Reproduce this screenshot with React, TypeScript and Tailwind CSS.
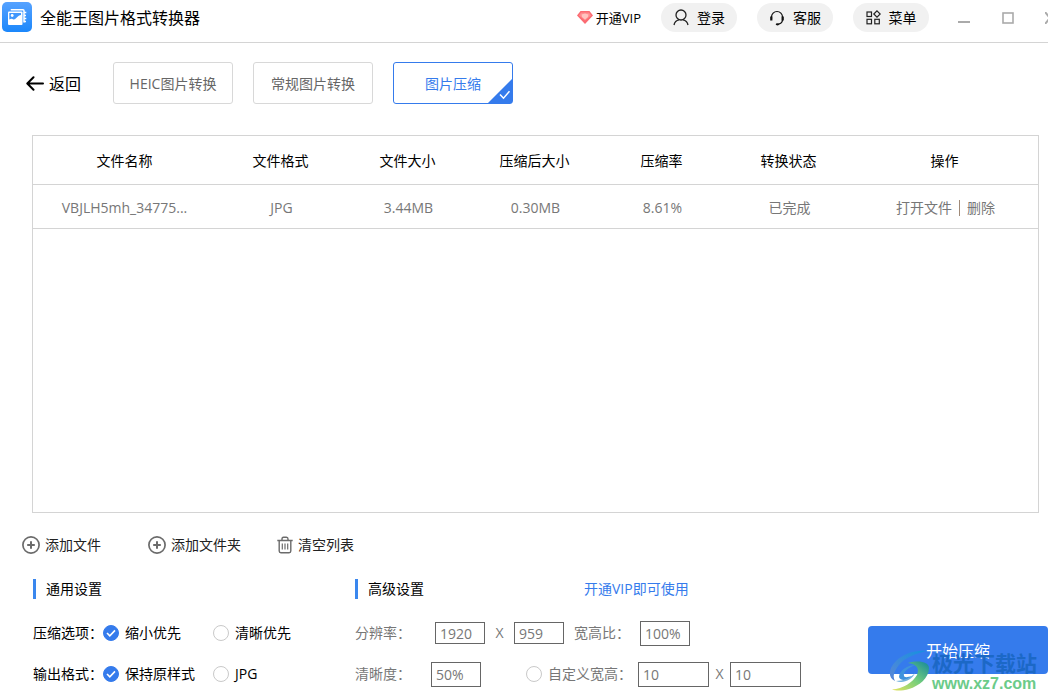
import type { ReactNode } from "react";

const columns = [
  { title: "文件名称", width: "w-[185px]" },
  { title: "文件格式", width: "w-[127px]" },
  { title: "文件大小", width: "w-[127px]" },
  { title: "压缩后大小", width: "w-[127px]" },
  { title: "压缩率", width: "w-[127px]" },
  { title: "转换状态", width: "w-[127px]" },
  { title: "操作", width: "w-[185px]" },
];

const files = [
  { name: "VBJLH5mh_34775...", format: "JPG", size: "3.44MB", compressed: "0.30MB", ratio: "8.61%", status: "已完成" },
];

function AppLogo() {
  return (
    <svg width="30" height="30" viewBox="0 0 30 30" aria-hidden="true">
      <defs>
        <linearGradient id="logo" x1="0" y1="0" x2="0" y2="1">
          <stop offset="0" stopColor="#56a2ff" />
          <stop offset="1" stopColor="#1b87fb" />
        </linearGradient>
      </defs>
      <rect width="30" height="30" rx="5" fill="url(#logo)" />
      <path d="M9.500 8.500V7.700H21q1 0 1 1V20.500" fill="none" stroke="#fff" strokeWidth="1.500" />
      <path d="M22 10.500h2.300M22 13.500h2M22 16.500h2.300M22 19.500h2" stroke="#fff" strokeWidth="1.300" />
      <rect x="6" y="9.500" width="14.500" height="13.500" rx="1" fill="#fff" />
      <path d="M7.300 17.500V11H19V13C15.500 13 14 18 11.500 17.500C10 16.500 9 16.500 7.300 17.500Z" fill="#3f97fd" />
      <circle cx="10.200" cy="13.500" r="1.400" fill="#fff" />
    </svg>
  );
}

function Diamond() {
  return (
    <svg width="16" height="13" viewBox="0 0 16 13" aria-hidden="true">
      <path d="M3.500 0h9L16 4.500 8 13 0 4.500Z" fill="#fb6b72" />
      <path d="M4 1.500h8l2 3-6 5-6-5Z" fill="#ff8d8f" />
      <path d="M4.500 3.500 8 2.500l3.500 1L11 6 8 8.500 5 6Z" fill="#ffc3c0" />
    </svg>
  );
}

function UserIcon() {
  return (
    <svg width="16" height="17" viewBox="0 0 16 17" fill="none" stroke="#222" strokeWidth="1.300" aria-hidden="true">
      <circle cx="8" cy="6" r="5" />
      <path d="M1 16c.6-3 2.600-4.800 5-5.200M15 16c-.6-3-2.600-4.800-5-5.200" />
    </svg>
  );
}

function HeadsetIcon() {
  return (
    <svg width="16" height="16" viewBox="0 0 16 16" fill="none" stroke="#111" aria-hidden="true">
      <path d="M2.500 9V7a5.500 5.500 0 0 1 11 0v2.500c0 2-1.500 4.200-4 4.700" strokeWidth="1.200" />
      <path d="M2.300 6.500v4M13.700 6.500v4" strokeWidth="2.200" />
      <ellipse cx="8.500" cy="14.300" rx="1.800" ry="1.100" fill="#111" stroke="none" />
    </svg>
  );
}

function MenuIcon() {
  return (
    <svg width="15" height="15" viewBox="0 0 15 15" fill="none" stroke="#222" strokeWidth="1.200" aria-hidden="true">
      <rect x="1" y="2" width="4.500" height="4.500" />
      <path d="M11 .8 14.200 4 11 7.200 7.800 4Z" />
      <rect x="1" y="9.300" width="4.500" height="4.500" />
      <rect x="8.800" y="9.300" width="4.500" height="4.500" />
    </svg>
  );
}

function BackArrow() {
  return (
    <svg width="18" height="15" viewBox="0 0 18 15" fill="none" stroke="#000" strokeWidth="2" strokeLinecap="round" strokeLinejoin="round" aria-hidden="true">
      <path d="M17 7.500H1.500M7.500 1.200 1.300 7.500l6.200 6.300" />
    </svg>
  );
}

function PlusIcon() {
  return (
    <svg width="18" height="18" viewBox="0 0 18 18" fill="none" stroke="#6b6b6b" aria-hidden="true">
      <circle cx="9" cy="9" r="8.100" strokeWidth="1.700" />
      <path d="M9 5.200v7.600M5.200 9h7.600" strokeWidth="2" />
    </svg>
  );
}

function TrashIcon() {
  return (
    <svg width="16" height="18" viewBox="0 0 16 18" fill="none" stroke="#6b6b6b" strokeWidth="1.400" aria-hidden="true">
      <path d="M.3 4.500h15.400M5 4.200V3q0-1.800 1.500-1.800h3Q11 1.200 11 3v1.200M2.200 4.500V15q0 1.700 1.700 1.700h8.200q1.700 0 1.700-1.700V4.500" />
      <path d="M5.300 7.500v6M8 7.500v6M10.700 7.500v6" strokeWidth="1.200" />
    </svg>
  );
}

function PillButton({ icon, children }: { icon: ReactNode; children: ReactNode }) {
  return (
    <button type="button" className="flex h-[29px] w-[76px] items-center justify-center gap-2 rounded-full bg-[#f1f1f1] leading-5">
      {icon}
      {children}
    </button>
  );
}

function ModeButton({ children, active = false }: { children: ReactNode; active?: boolean }) {
  return (
    <button
      type="button"
      aria-pressed={active}
      className={
        active
          ? "relative h-[42px] w-[120px] rounded-[3px] border border-[#357bec] pt-[2px] text-[#357bec]"
          : "h-[42px] w-[120px] rounded-[3px] border border-[#d8d8d8] pt-[2px] text-[#666]"
      }
    >
      {children}
      {active && (
        <svg className="absolute right-0 bottom-0" width="24" height="24" viewBox="0 0 24 24" aria-hidden="true">
          <path d="M24 0V24H0Z" fill="#357bec" />
          <path d="m12 15.500 3.500 3.700 6-7" fill="none" stroke="#fff" strokeWidth="1.500" />
        </svg>
      )}
    </button>
  );
}

function Radio({ name, label, checked = false, className = "" }: { name: string; label: string; checked?: boolean; className?: string }) {
  return (
    <label className={`flex items-center gap-[6px] ${className}`}>
      <span className="grid size-4 shrink-0 place-items-center">
        <input
          type="radio"
          name={name}
          defaultChecked={checked}
          className="peer col-start-1 row-start-1 size-4 appearance-none rounded-full border border-[#c9c9c9] bg-white checked:border-[#357bec] checked:bg-[#357bec]"
        />
        <svg className="pointer-events-none invisible col-start-1 row-start-1 peer-checked:visible" width="16" height="16" viewBox="0 0 16 16" aria-hidden="true">
          <path d="m4 8 2.800 2.800L12 5.400" fill="none" stroke="#fff" strokeWidth="1.600" />
        </svg>
      </span>
      <span>{label}</span>
    </label>
  );
}

function SectionTitle({ children }: { children: ReactNode }) {
  return <h2 className="border-l-[3px] border-[#3a87ee] pl-[10px] leading-5">{children}</h2>;
}

const field = "border border-[#666] bg-white pl-1 text-[#777] outline-none";

function Watermark() {
  return (
    <div className="pointer-events-none absolute top-[23px] left-[20px] flex items-center gap-[1px]" aria-hidden="true">
      <svg width="43" height="42" viewBox="0 0 43 42">
        <defs>
          <linearGradient id="wave-blue" x1="0" y1="1" x2="1" y2="0">
            <stop offset="0" stopColor="#5b86d6" />
            <stop offset="1" stopColor="#1590e0" />
          </linearGradient>
          <linearGradient id="wave-green" x1="0" y1="1" x2="1" y2="0">
            <stop offset="0" stopColor="#e6e45c" />
            <stop offset=".5" stopColor="#75ce7c" />
            <stop offset="1" stopColor="#14889a" />
          </linearGradient>
        </defs>
        <path d="M38 1C27 0 15 4 8 11 1 18-1 27 7 31 3 25 9 16 16 10 22 6 30 3 38 1Z" fill="url(#wave-blue)" />
        <path d="M27 15C19 15 11 21 11 27c1 4 9 4 13-1-4 1-7 2-8 0-1-4 4-8 11-11Z" fill="#3f93dc" />
        <path d="M8 31C15 34 24 30 27 23 23 28 15 31 8 31Z" fill="#6fb0dd" />
        <path d="M20 13C31 10 41 12 41 18 41 28 31 36 21 39 14 41 8 41 4 39.500 15 39 25 32 29 25 32 18 28 14 20 13Z" fill="url(#wave-green)" />
      </svg>
      <div className="pt-[2px]">
        <div className="text-[21px] leading-[24px] font-bold whitespace-nowrap text-[#1c68c6]">极光下载站</div>
        <div className="font-['Liberation_Sans',sans-serif] text-[16px] leading-[18px] font-bold text-[#6bcb89]">www.xz7.com</div>
      </div>
    </div>
  );
}

export default function App() {
  return (
    <div className="flex h-screen min-h-[560px] flex-col overflow-hidden bg-white font-['Open_Sans','Noto_Sans_CJK_SC',sans-serif] text-[14px] leading-5 text-black">
      <header className="flex h-[43px] shrink-0 items-start justify-between border-b border-[#d4d4d4] pl-[2px]">
        <div className="flex items-center gap-2 pt-[2px]">
          <AppLogo />
          <h1 className="pt-px text-[16px] leading-6">全能王图片格式转换器</h1>
        </div>
        <div className="-mr-[7px] flex shrink-0 items-center gap-5 pt-[3px]">
          <a href="#vip" className="flex items-center gap-[3px] text-[13px]">
            <Diamond />
            开通VIP
          </a>
          <PillButton icon={<UserIcon />}>登录</PillButton>
          <PillButton icon={<HeadsetIcon />}>客服</PillButton>
          <PillButton icon={<MenuIcon />}>菜单</PillButton>
          <div className="flex items-center gap-[31px] pl-2">
            <button type="button" aria-label="最小化">
              <svg width="14" height="12" viewBox="0 0 14 12"><path d="M1 10h12" stroke="#aaa" strokeWidth="2" /></svg>
            </button>
            <button type="button" aria-label="最大化">
              <svg width="12" height="12" viewBox="0 0 12 12"><rect x="1" y="1" width="10" height="10" fill="none" stroke="#aaa" strokeWidth="1.600" /></svg>
            </button>
            <button type="button" aria-label="关闭">
              <svg width="10" height="12" viewBox="0 0 10 12"><path d="m0 0 10 12M10 0 0 12" stroke="#aaa" strokeWidth="2" /></svg>
            </button>
          </div>
        </div>
      </header>

      <nav className="flex shrink-0 items-center gap-5 pt-[19px] pl-[26px]">
        <a href="#back" className="flex w-[67px] items-center gap-[5px] text-[16px] leading-6">
          <BackArrow />
          <span className="pt-[2px]">返回</span>
        </a>
        <ModeButton>HEIC图片转换</ModeButton>
        <ModeButton>常规图片转换</ModeButton>
        <ModeButton active>图片压缩</ModeButton>
      </nav>

      <main className="mt-[31px] mr-[9px] ml-8 min-h-0 flex-1 overflow-auto border border-[#d4d4d4]">
        <table className="w-full table-fixed border-collapse text-center">
          <thead>
            <tr className="h-12 border-b border-[#d4d4d4]">
              {columns.map((c) => (
                <th key={c.title} className={`${c.width} pt-[3px] pr-[2px] font-normal`}>{c.title}</th>
              ))}
            </tr>
          </thead>
          <tbody>
            {files.map((f) => (
              <tr key={f.name} className="h-11 border-b border-[#d4d4d4] text-[#777] *:pt-[3px]">
                <td className="pr-[2px]">{f.name}</td>
                <td>{f.format}</td>
                <td>{f.size}</td>
                <td>{f.compressed}</td>
                <td>{f.ratio}</td>
                <td>{f.status}</td>
                <td>
                  <span className="flex items-center justify-center gap-[7px]">
                    <button type="button">打开文件</button>
                    <span className="h-4 w-px bg-[#a08a78]" />
                    <button type="button">删除</button>
                  </span>
                </td>
              </tr>
            ))}
          </tbody>
        </table>
      </main>

      <div className="flex shrink-0 items-center pt-[22px] pl-[22px] text-[#222]">
        <button type="button" className="flex w-[126px] items-center gap-[5px]"><PlusIcon />添加文件</button>
        <button type="button" className="flex w-[129px] items-center gap-[5px]"><PlusIcon />添加文件夹</button>
        <button type="button" className="flex items-center gap-[5px]"><TrashIcon />清空列表</button>
      </div>

      <div className="flex shrink-0 items-start pt-6 pb-[13px] pl-[33px]">
        <section className="w-[322px] shrink-0">
          <SectionTitle>通用设置</SectionTitle>
          <div className="mt-[21px] flex h-[26px] items-center" role="radiogroup" aria-label="压缩选项">
            <span className="w-[70px]">压缩选项：</span>
            <Radio name="priority" label="缩小优先" checked className="w-[110px]" />
            <Radio name="priority" label="清晰优先" />
          </div>
          <div className="mt-[15px] flex h-[26px] items-center" role="radiogroup" aria-label="输出格式">
            <span className="w-[70px]">输出格式：</span>
            <Radio name="format" label="保持原样式" checked className="w-[110px]" />
            <Radio name="format" label="JPG" />
          </div>
        </section>

        <section className="w-[446px] shrink-0 text-[#777]">
          <div className="flex text-black">
            <div className="w-[229px]"><SectionTitle>高级设置</SectionTitle></div>
            <a href="#vip" className="text-[#357bec]">开通VIP即可使用</a>
          </div>
          <div className="mt-[21px] flex h-[26px] items-center">
            <label htmlFor="res-w" className="w-[80px]">分辨率：</label>
            <input id="res-w" defaultValue="1920" className={`${field} h-[22px] w-[50px]`} />
            <span className="w-[29px] text-center">X</span>
            <input aria-label="分辨率高度" defaultValue="959" className={`${field} h-[22px] w-[50px]`} />
            <label htmlFor="aspect" className="w-[76px] pl-[10px]">宽高比：</label>
            <input id="aspect" defaultValue="100%" className={`${field} h-[25px] w-[50px]`} />
          </div>
          <div className="mt-[15px] flex h-[26px] items-center">
            <label htmlFor="clarity" className="w-[76px]">清晰度：</label>
            <input id="clarity" defaultValue="50%" className={`${field} h-[25px] w-[50px]`} />
            <Radio name="custom-size" label="自定义宽高：" className="ml-[45px] w-[112px] whitespace-nowrap" />
            <input aria-label="自定义宽度" defaultValue="10" className={`${field} h-[25px] w-[71px]`} />
            <span className="w-[21px] text-center">X</span>
            <input aria-label="自定义高度" defaultValue="10" className={`${field} h-[25px] w-[71px]`} />
          </div>
        </section>

        <div className="relative mt-[47px] ml-auto shrink-0">
          <button type="button" className="h-12 w-[180px] rounded bg-[#357bec] pt-[2px] text-[16px] text-white">开始压缩</button>
          <Watermark />
        </div>
      </div>
    </div>
  );
}
